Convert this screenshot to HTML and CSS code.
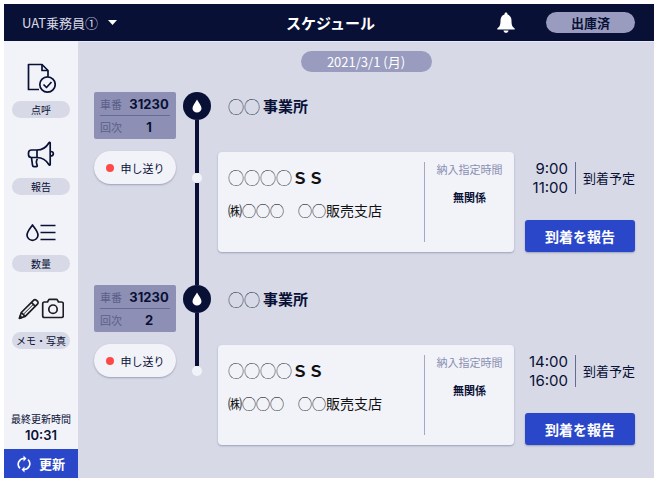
FILE: index.html
```html
<!DOCTYPE html>
<html lang="ja">
<head>
    <meta charset="UTF-8">
    <meta name="viewport" content="width=device-width, initial-scale=1.0">
    <title>スケジュール</title>
    <link rel="stylesheet" href="styles.css">
</head>
<body>

    <header class="topbar">
        <div class="crew">
            <select class="crew-select" aria-label="乗務員">
                <option>UAT乗務員①</option>
            </select>
            <svg class="caret" viewBox="0 0 9 5"><path d="M0 0h9L4.5 5z"/></svg>
        </div>
        <h1 class="page-title">スケジュール</h1>
        <div class="topbar-right">
            <button class="bell-btn" aria-label="お知らせ">
                <svg width="18" height="22" viewBox="0 0 18 22" fill="#fff">
                    <path d="M9 0.5c.9 0 1.500.6 1.500 1.500v.6c2.700.8 4 3 4 6 0 4.400.7 6.300 2.900 7.600.6.4.6 1.300-.3 1.300H.9c-.9 0-.9-.9-.3-1.300C2.800 14.900 3.500 13 3.500 8.600c0-3 1.300-5.200 4-6V2c0-.9.6-1.500 1.500-1.500z"/>
                    <path d="M6.500 18.500h5c-.2 1.500-1.200 2.300-2.500 2.300s-2.300-.8-2.500-2.300z"/>
                </svg>
            </button>
            <span class="status">出庫済</span>
        </div>
    </header>

    <div class="layout">
        <aside class="sidebar">
            <nav class="menu">
                <a class="menu-item" href="#">
                    <svg width="30" height="32" viewBox="0 0 30 32" class="line-icon">
                        <path d="M13 27.500H2.500v-25H16l6 6v6"/>
                        <path d="M16 2.500v6h6"/>
                        <circle cx="21.500" cy="22.500" r="7.700"/>
                        <path d="M17.500 22.500l3 3 5-5.500"/>
                    </svg>
                    <span class="menu-label">点呼</span>
                </a>
                <a class="menu-item" href="#">
                    <svg width="28" height="28" viewBox="0 0 28 28" class="line-icon">
                        <path d="M10 9H4.500C3 9 1.500 10 1.500 12v1.500c0 2 1.500 3 3 3H10z"/>
                        <path d="M10 9c5 0 9.500-3 12-7.300.4-.6 1.200-.4 1.200.3v21.500c0 .7-.8.9-1.200.3-2.500-4.300-7-7.300-12-7.300"/>
                        <path d="M4.500 16.800l1 7.400c.1.900.7 1.500 1.500 1.500h2.300c.8 0 1.100-.6.9-1.300l-.7-2.400c-.3-1-.2-1.500.1-2.300l.7-2"/>
                        <path d="M23.500 10.500c3.800 0 3.800 4.500 0 4.500"/>
                    </svg>
                    <span class="menu-label">報告</span>
                </a>
                <a class="menu-item" href="#">
                    <svg width="30" height="20" viewBox="0 0 30 20" class="line-icon">
                        <path d="M6.500 3C4.500 6 1 9.500 1 13a5.500 5.300 0 0 0 11 0C12 9.500 8.500 6 6.500 3z"/>
                        <path d="M14.500 3.500h15M14.500 10.500h15M14.500 17.500h15"/>
                    </svg>
                    <span class="menu-label">数量</span>
                </a>
                <a class="menu-item" href="#">
                    <svg width="46" height="22" viewBox="0 0 46 22" class="line-icon dark">
                        <path d="M1.500 20.300l1.800-5.800L15.500 2.300c.9-.9 2.100-.8 3 0l.9.9c.9.9.9 2.100 0 3L7.200 18.400z"/>
                        <path d="M13.400 4.400l3.900 3.900M3.300 14.500l3.900 3.900"/>
                        <path d="M5.300 16.400L15.300 6.400" stroke-width="1"/>
                        <path d="M1.500 20.300l.6-2.100 1.500 1.500z" fill="#1c1c22"/>
                        <path d="M26.500 4h3l1-1.900c.2-.5.700-.8 1.200-.8h6.600c.5 0 1 .3 1.200.8l1 1.900h3c1.100 0 1.800.7 1.800 1.800V17.700c0 1.100-.7 1.800-1.800 1.800h-17c-1.100 0-1.800-.7-1.800-1.800V5.800c0-1.100.7-1.800 1.800-1.800z"/>
                        <circle cx="35" cy="11.200" r="4.200"/>
                    </svg>
                    <span class="menu-label">メモ・写真</span>
                </a>
            </nav>
            <div class="updated">
                <span class="updated-label">最終更新時間</span>
                <time class="updated-time">10:31</time>
            </div>
            <button class="refresh-btn">
                <svg width="14" height="18" viewBox="0 0 14 18" fill="none" stroke="#fff" stroke-width="1.600">
                    <path d="M3 13.300A5.700 5.700 0 0 1 7.500 3.500M11 4.700A5.700 5.700 0 0 1 6.500 14.500"/>
                    <path d="M6.500 .5l3 3-3 3zM7.500 11.500l-3 3 3 3z" fill="#fff" stroke="none"/>
                </svg>
                更新
            </button>
        </aside>

        <main class="schedule">
            <div class="date">2021/3/1 (月)</div>

            <section class="stop">
                <div class="stop-info">
                    <dl class="plate">
                        <div class="plate-row"><dt>車番</dt><dd>31230</dd></div>
                        <div class="plate-row"><dt>回次</dt><dd>1</dd></div>
                    </dl>
                    <button class="note-btn"><span class="red-dot"></span>申し送り</button>
                </div>
                <div class="timeline">
                    <span class="marker">
                        <svg width="10" height="14" viewBox="0 0 10 14"><path d="M5 .5C3.500 3.500.5 6.500.5 9.300a4.500 4.300 0 0 0 9 0C9.500 6.500 6.500 3.500 5 .5z" fill="#fff"/></svg>
                    </span>
                    <span class="track"></span>
                    <span class="node"></span>
                    <span class="track track-rest"></span>
                </div>
                <div class="stop-body">
                    <h2 class="office"><span class="circles">◯◯</span>事業所</h2>
                    <div class="stop-row">
                        <div class="card">
                            <div class="customer">
                                <h3 class="station"><span class="circles">◯◯◯◯</span>ＳＳ</h3>
                                <p class="branch">㈱◯◯◯　◯◯販売支店</p>
                            </div>
                            <div class="delivery">
                                <p class="delivery-label">納入指定時間</p>
                                <p class="delivery-value">無関係</p>
                            </div>
                        </div>
                        <div class="arrival">
                            <div class="eta">
                                <div class="eta-times"><time>9:00</time><time>11:00</time></div>
                                <span class="eta-label">到着予定</span>
                            </div>
                            <button class="report-btn">到着を報告</button>
                        </div>
                    </div>
                </div>
            </section>

            <section class="stop">
                <div class="stop-info">
                    <dl class="plate">
                        <div class="plate-row"><dt>車番</dt><dd>31230</dd></div>
                        <div class="plate-row"><dt>回次</dt><dd>2</dd></div>
                    </dl>
                    <button class="note-btn"><span class="red-dot"></span>申し送り</button>
                </div>
                <div class="timeline">
                    <span class="marker">
                        <svg width="10" height="14" viewBox="0 0 10 14"><path d="M5 .5C3.500 3.500.5 6.500.5 9.300a4.500 4.300 0 0 0 9 0C9.500 6.500 6.500 3.500 5 .5z" fill="#fff"/></svg>
                    </span>
                    <span class="track"></span>
                    <span class="node"></span>
                </div>
                <div class="stop-body">
                    <h2 class="office"><span class="circles">◯◯</span>事業所</h2>
                    <div class="stop-row">
                        <div class="card">
                            <div class="customer">
                                <h3 class="station"><span class="circles">◯◯◯◯</span>ＳＳ</h3>
                                <p class="branch">㈱◯◯◯　◯◯販売支店</p>
                            </div>
                            <div class="delivery">
                                <p class="delivery-label">納入指定時間</p>
                                <p class="delivery-value">無関係</p>
                            </div>
                        </div>
                        <div class="arrival">
                            <div class="eta">
                                <div class="eta-times"><time>14:00</time><time>16:00</time></div>
                                <span class="eta-label">到着予定</span>
                            </div>
                            <button class="report-btn">到着を報告</button>
                        </div>
                    </div>
                </div>
            </section>
        </main>
    </div>

</body>
</html>
```
FILE: styles.css
```css
:root {
    --navy: #091036;
    --bg: #d7dae6;
    --panel: #f2f3f9;
    --blue: #2a47c9;
    --muted: #999cbe;
}
* {
    box-sizing: border-box;
}
body {
    margin: 0;
    padding: 4px 4px 5px;
    min-height: 100vh;
    display: flex;
    flex-direction: column;
    font-family: "Noto Sans CJK JP", sans-serif;
    color: var(--navy);
    background-color: white;
}
h1, h2, h3, p, dl, dd {
    margin: 0;
}
button, select {
    font-family: inherit;
    border: none;
    cursor: pointer;
}

/* Top bar */
.topbar {
    display: grid;
    grid-template-columns: 1fr auto 1fr;
    align-items: center;
    height: 37px;
    padding: 0 19px 0 18px;
    background-color: var(--navy);
    color: white;
}
.crew {
    display: flex;
    align-items: center;
    gap: 9px;
}
.crew-select {
    appearance: none;
    padding: 0;
    background: none;
    color: #d7dae6;
    font-size: 13px;
}
.caret {
    width: 9px;
    height: 5px;
    fill: white;
    pointer-events: none;
}
.page-title {
    padding-left: 4px;
    font-size: 15px;
    font-weight: bold;
    line-height: 18px;
}
.topbar-right {
    display: flex;
    justify-content: flex-end;
    align-items: center;
    gap: 31px;
}
.bell-btn {
    display: flex;
    padding: 0;
    background: none;
}
.status {
    width: 89px;
    border-radius: 11px;
    background-color: var(--muted);
    color: var(--navy);
    font-size: 13px;
    font-weight: bold;
    line-height: 21px;
    text-align: center;
}

/* Sidebar */
.layout {
    flex: 1;
    display: flex;
}
.sidebar {
    width: 74px;
    display: flex;
    flex-direction: column;
    background-color: var(--panel);
}
.menu {
    display: flex;
    flex-direction: column;
    gap: 13px;
    padding: 13px 8px 0;
}
.menu-item {
    display: flex;
    flex-direction: column;
    align-items: center;
    justify-content: space-between;
    height: 64px;
    color: inherit;
    text-decoration: none;
}
.menu-item svg {
    margin: auto;
}
.line-icon {
    fill: none;
    stroke: var(--navy);
    stroke-width: 1.7;
    stroke-linejoin: round;
}
.line-icon.dark {
    stroke: #1c1c22;
}
.menu-label {
    width: 100%;
    border-radius: 9px;
    background-color: var(--bg);
    font-size: 10px;
    line-height: 17px;
    text-align: center;
}
.updated {
    display: flex;
    flex-direction: column;
    margin-top: auto;
    padding-bottom: 6px;
    text-align: center;
    line-height: 16px;
}
.updated-label {
    font-size: 10px;
}
.updated-time {
    font-family: Inter, sans-serif;
    font-size: 13px;
    font-weight: 600;
}
.refresh-btn {
    display: flex;
    align-items: center;
    justify-content: center;
    gap: 8px;
    height: 29px;
    padding: 0;
    background-color: var(--blue);
    color: white;
    font-size: 13px;
    font-weight: bold;
}

/* Schedule */
.schedule {
    flex: 1;
    padding: 9px 16px 0;
    border-top: 1px solid #e6e9f5;
    background-color: var(--bg);
}
.date {
    width: 131px;
    margin: 0 auto 20px;
    border-radius: 11px;
    background-color: var(--muted);
    color: white;
    font-size: 13px;
    line-height: 21px;
    text-align: center;
}
.stop {
    display: grid;
    grid-template-columns: 82px 28px 1fr;
    column-gap: 7px;
    padding-right: 3px;
}
.stop-info {
    display: flex;
    flex-direction: column;
    gap: 12px;
}
.plate {
    height: 47px;
    padding: 0 6px;
    border-radius: 2px;
    background-color: #8d90b4;
}
.plate-row {
    display: flex;
    align-items: center;
    height: 23px;
    line-height: 16px;
}
.plate-row + .plate-row {
    border-top: 1px solid #666a96;
}
.plate dt {
    width: 28px;
    font-size: 11px;
    color: #5a5e8b;
}
.plate dd {
    flex: 1;
    font-family: Inter, sans-serif;
    font-size: 13px;
    font-weight: bold;
    text-align: center;
}
.note-btn {
    display: flex;
    align-items: center;
    justify-content: center;
    gap: 7px;
    height: 33px;
    padding: 0;
    border-radius: 17px;
    background-color: var(--panel);
    box-shadow: 0 1px 2px rgba(20, 25, 70, 0.3);
    color: var(--navy);
    font-size: 11px;
}
.red-dot {
    width: 8px;
    height: 8px;
    border-radius: 50%;
    background-color: #ff4848;
}
.timeline {
    display: flex;
    flex-direction: column;
    align-items: center;
}
.marker {
    display: flex;
    align-items: center;
    justify-content: center;
    width: 28px;
    height: 28px;
    border-radius: 50%;
    background-color: var(--navy);
}
.track {
    width: 4px;
    height: 53px;
    background-color: var(--navy);
}
.track-rest {
    flex: 1;
}
.node {
    width: 10px;
    height: 10px;
    border-radius: 50%;
    background-color: var(--panel);
}
.stop-body {
    padding-bottom: 33px;
}
.stop:last-child .stop-body {
    padding-bottom: 0;
}
.office {
    display: flex;
    align-items: center;
    height: 28px;
    padding-left: 10px;
    margin-bottom: 32px;
    font-size: 15px;
    line-height: 24px;
}
.circles {
    margin-right: 3px;
    font-size: 16px;
    font-weight: 300;
}
.stop-row {
    display: flex;
    gap: 11px;
}
.card {
    flex: 1;
    display: flex;
    height: 100px;
    padding: 10px 0;
    border-radius: 4px;
    background-color: var(--panel);
    box-shadow: 0 1px 2px rgba(20, 25, 70, 0.3);
}
.customer {
    flex: 1;
    padding: 3px 0 0 10px;
    color: #111;
}
.station {
    margin-bottom: 9px;
    font-size: 16px;
    line-height: 24px;
}
.station .circles {
    margin-right: 0;
}
.branch {
    font-size: 14px;
    line-height: 24px;
}
.delivery {
    width: 90px;
    border-left: 1px solid #a4a8c4;
    text-align: center;
}
.delivery-label {
    margin-bottom: 13px;
    color: #8a8fb2;
    font-size: 11px;
    line-height: 14px;
}
.delivery-value {
    font-size: 11px;
    font-weight: bold;
    line-height: 16px;
}
.arrival {
    display: flex;
    flex-direction: column;
    justify-content: space-between;
    width: 110px;
    padding-top: 7px;
}
.eta {
    display: flex;
    align-items: center;
    justify-content: flex-end;
}
.eta-times {
    display: flex;
    flex-direction: column;
    padding-right: 7px;
    font-family: Inter, sans-serif;
    font-size: 15px;
    line-height: 19px;
    text-align: right;
}
.eta-label {
    padding-left: 7px;
    border-left: 1px solid #666a96;
    font-size: 13px;
    line-height: 32px;
}
.report-btn {
    height: 32px;
    padding: 0;
    border-radius: 3px;
    background-color: var(--blue);
    box-shadow: 0 1px 2px rgba(20, 25, 70, 0.3);
    color: white;
    font-size: 14px;
    font-weight: bold;
}
```
